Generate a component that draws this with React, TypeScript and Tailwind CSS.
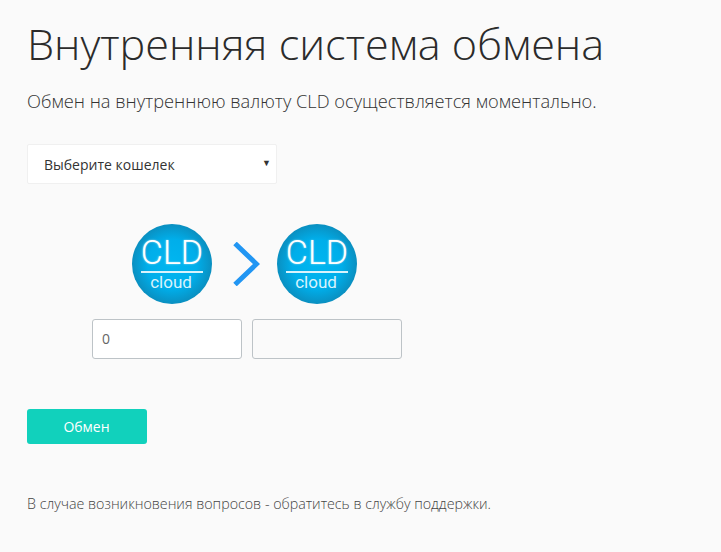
function CldLogo() {
  return (
    <div className="flex h-20 w-20 flex-col items-center rounded-full bg-[radial-gradient(circle_closest-side,#00b6f0_0%,#00aeea_62%,#0a8fc0_100%)] font-['Roboto',sans-serif] text-white">
      <div className="mt-[12px] h-[33px] text-[34px] leading-[33px] font-light [text-shadow:0_0_2px_rgba(255,255,255,0.6)]">
        CLD
      </div>
      <div className="mt-[2px] h-[2px] w-[62px] bg-[#d8f3fc]" />
      <div className="mr-[2px] text-[17px] leading-[18px] text-[#d8f3fc]">cloud</div>
    </div>
  );
}

function Chevron() {
  return (
    <svg width="27" height="44" viewBox="0 0 27 44" fill="none">
      <path d="M2 1.5 L23.5 22 L2 42.5" stroke="#2196f3" strokeWidth="5" />
    </svg>
  );
}

export default function App() {
  return (
    <div className="h-[552px] w-[721px] overflow-hidden bg-[#fafafa] px-[27px] font-['Open_Sans',sans-serif] text-[#333]">
      <h1 className="pt-[14px] text-[43.2px] leading-[60px] font-light text-[#2b2b2b]">
        Внутренняя система обмена
      </h1>

      <p className="mt-[15px] text-[18.25px] leading-[24px] font-light text-[#333]">
        Обмен на внутреннюю валюту CLD осуществляется моментально.
      </p>

      {/* Wallet select */}
      <div className="mt-[31px] flex h-10 w-[250px] items-center justify-between rounded-[2px] border border-[#f0f0f0] bg-white pr-[5px] pl-4 text-[14px]">
        <span>Выберите кошелек</span>
        <span className="mb-[3px] text-[9px] text-[#333]">▼</span>
      </div>

      {/* Exchange */}
      <div className="mt-10 ml-[105px] flex items-center">
        <CldLogo />
        <div className="ml-[21px] mr-[17px] flex">
          <Chevron />
        </div>
        <CldLogo />
      </div>

      <div className="mt-[15px] ml-[65px] flex gap-[10px]">
        <div className="flex h-10 w-[150px] items-center rounded-[3px] border border-[#bdc3c7] bg-white pb-[1px] pl-[9px] text-[14px] text-[#666]">
          0
        </div>
        <div className="h-10 w-[150px] rounded-[3px] border border-[#bdc3c7] bg-[#fafafa]" />
      </div>

      <button className="mt-[50px] block h-[35px] w-[120px] rounded-[3px] bg-[#11d1bc] pr-[1px] text-[14px] text-white">
        Обмен
      </button>

      <p className="mt-[50px] text-[14.25px] leading-5 font-light text-[#444]">
        В случае возникновения вопросов - обратитесь в службу поддержки.
      </p>
    </div>
  );
}
